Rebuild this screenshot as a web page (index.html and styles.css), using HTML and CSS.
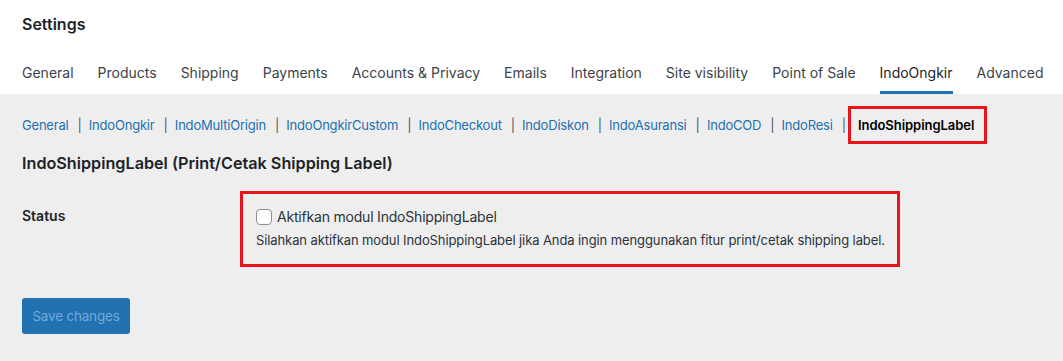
FILE: index.html
```html
<!DOCTYPE html>
<html lang="en">
<head>
<meta charset="utf-8">
<title>Settings</title>
<link rel="stylesheet" href="styles.css">
</head>
<body>
<header class="top">
  <h1 class="title">Settings</h1>
  <nav class="tabs">
    <a class="tab">General</a>
    <a class="tab">Products</a>
    <a class="tab">Shipping</a>
    <a class="tab">Payments</a>
    <a class="tab">Accounts &amp; Privacy</a>
    <a class="tab">Emails</a>
    <a class="tab">Integration</a>
    <a class="tab">Site visibility</a>
    <a class="tab">Point of Sale</a>
    <a class="tab active">IndoOngkir</a>
    <a class="tab">Advanced</a>
  </nav>
</header>
<main class="main">
  <ul class="subsub">
    <li><a>General</a><span class="sep">|</span></li>
    <li><a>IndoOngkir</a><span class="sep">|</span></li>
    <li><a>IndoMultiOrigin</a><span class="sep">|</span></li>
    <li><a>IndoOngkirCustom</a><span class="sep">|</span></li>
    <li><a>IndoCheckout</a><span class="sep">|</span></li>
    <li><a>IndoDiskon</a><span class="sep">|</span></li>
    <li><a>IndoAsuransi</a><span class="sep">|</span></li>
    <li><a>IndoCOD</a><span class="sep">|</span></li>
    <li><a>IndoResi</a><span class="sep">|</span></li>
    <li><span class="current">IndoShippingLabel</span></li>
  </ul>
  <h2 class="heading">IndoShippingLabel (Print/Cetak Shipping Label)</h2>
  <div class="row">
    <div class="label">Status</div>
    <div class="field">
      <label class="check"><span class="box"></span>Aktifkan modul IndoShippingLabel</label>
      <p class="desc">Silahkan aktifkan modul IndoShippingLabel jika Anda ingin menggunakan fitur print/cetak shipping label.</p>
    </div>
  </div>
  <button class="save" type="button">Save changes</button>
</main>
</body>
</html>
```
FILE: styles.css
```css
* { box-sizing: border-box; }
html, body { margin: 0; height: 100%; }
body {
  font-family: Inter, "Noto Sans", sans-serif;
  color: #1d2327;
  background: #eeeeef;
  -webkit-font-smoothing: antialiased;
}
.top {
  background: #fff;
  padding: 14px 22px 0;
  height: 94px;
}
.title {
  margin: 0;
  font-size: 16px;
  line-height: 20px;
  font-weight: 600;
  color: #1d2327;
}
.tabs {
  display: flex;
  gap: 24px;
  margin-top: 29px;
}
.tab {
  font-size: 14px;
  line-height: 20px;
  color: #3c434a;
  padding-bottom: 8px;
  border-bottom: 3px solid transparent;
  white-space: nowrap;
}
.tab.active {
  color: #1d2327;
  border-bottom-color: #2271b1;
}
.main { padding: 0 22px; }
.subsub {
  list-style: none;
  margin: 21px 0 0;
  padding: 0;
  display: flex;
  align-items: center;
  height: 20px;
  font-size: 13px;
  line-height: 20px;
}
.subsub li { display: flex; align-items: center; white-space: nowrap; }
.subsub a { color: #2271b1; letter-spacing: -0.2px; }
.sep { color: #50575e; margin: 0 7px 0 9px; }
.current {
  font-weight: 600;
  color: #000;
  border: 3px solid #e8141b;
  padding: 6px 10px 6px 7px;
  margin: -9px 0 -9px -5px;
  letter-spacing: -0.05px;
}
.heading {
  margin: 18px 0 0;
  font-size: 16.2px;
  line-height: 20px;
  font-weight: 600;
}
.row {
  display: grid;
  grid-template-columns: 218px 660px;
  margin-top: 18px;
}
.label {
  font-size: 14px;
  font-weight: 600;
  line-height: 20px;
  padding-top: 15px;
}
.field {
  border: 3px solid #e8141b;
  padding: 13px 10px 15px 13px;
  height: 76px;
}
.check {
  display: flex;
  align-items: center;
  gap: 5px;
  font-size: 14px;
  line-height: 20px;
  letter-spacing: -0.2px;
  color: #2c3338;
}
.box {
  width: 16px;
  height: 16px;
  border: 1px solid #8c8f94;
  border-radius: 4px;
  background: #fff;
}
.desc {
  margin: 4px 0 0;
  font-size: 13px;
  line-height: 18px;
  letter-spacing: -0.1px;
  white-space: nowrap;
  color: #2c3338;
}
.save {
  margin-top: 31px;
  width: 108px;
  height: 36px;
  border: 0;
  border-radius: 3px;
  background: #2271b1;
  color: #72a9db;
  font-family: inherit;
  font-size: 13.5px;
  letter-spacing: -0.2px;
  padding: 0;
}
```
